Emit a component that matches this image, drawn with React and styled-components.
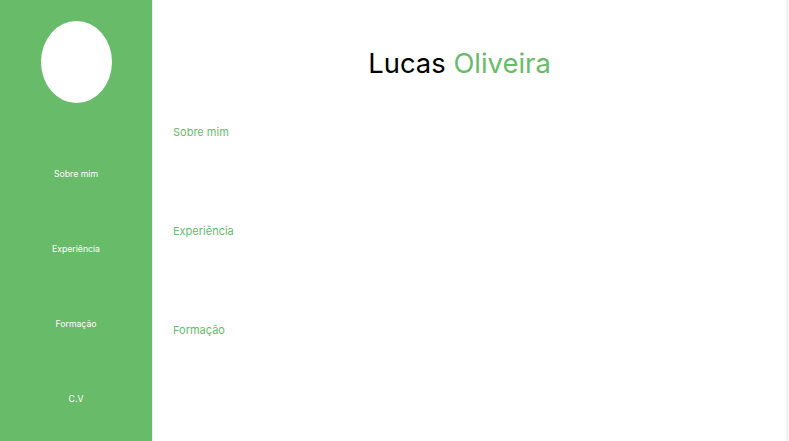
import styled, { createGlobalStyle } from "styled-components"

const Global = createGlobalStyle`
    html, body {
        margin: 0;
        padding: 0;
        background-color: white;
        font-family: Inter, "Noto Sans", sans-serif;
    }
`

const Page = styled.div`
    display: flex;
    height: 441px;
    width: 789px;
    overflow: hidden;
`

const Sidebar = styled.aside`
    width: 152px;
    flex-shrink: 0;
    background-color: #68bb69;
    border-right: 1px solid #e8f3e8;
    display: flex;
    flex-direction: column;
    align-items: center;
`

const Avatar = styled.div`
    width: 71px;
    height: 82px;
    border-radius: 50%;
    background-color: white;
    margin-top: 21px;
`

const Nav = styled.nav`
    margin-top: 33px;
    display: flex;
    flex-direction: column;
    width: 100%;
`

const NavItem = styled.a`
    height: 75px;
    display: flex;
    align-items: center;
    justify-content: center;
    color: white;
    font-size: 8.7px;
    text-decoration: none;
`

const Main = styled.main`
    flex: 1;
    padding: 0 40px 0 20px;
    border-right: 3px solid #f2f2f2;
`

const Title = styled.h1`
    margin: 45px 0 0 0;
    text-align: center;
    font-size: 27.4px;
    font-weight: 400;
    line-height: 36px;
    color: #000;
`

const Green = styled.span`
    color: #68bb69;
`

const Section = styled.section`
    height: 99px;
`

const SectionTitle = styled.h2`
    margin: 0;
    font-size: 11px;
    font-weight: 400;
    line-height: 14px;
    color: #68bb69;
`

const Sections = styled.div`
    margin-top: 44px;
`

const App = () => {
    const links = ["Sobre mim", "Experiência", "Formação", "C.V"]
    const sections = ["Sobre mim", "Experiência", "Formação"]

    return (
        <Page>
            <Global />
            <Sidebar>
                <Avatar />
                <Nav>
                    {links.map((l) => (
                        <NavItem key={l} href="#">{l}</NavItem>
                    ))}
                </Nav>
            </Sidebar>
            <Main>
                <Title>Lucas <Green>Oliveira</Green></Title>
                <Sections>
                    {sections.map((s) => (
                        <Section key={s}>
                            <SectionTitle>{s}</SectionTitle>
                        </Section>
                    ))}
                </Sections>
            </Main>
        </Page>
    )
}

export default App
